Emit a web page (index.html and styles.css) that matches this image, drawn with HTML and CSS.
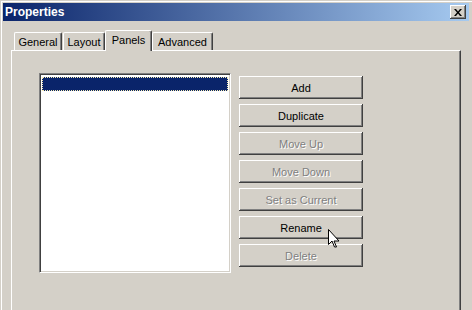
FILE: index.html
```html
<!DOCTYPE html>
<html lang="en">
<head>
  <meta charset="UTF-8">
  <title>Properties</title>
  <link rel="stylesheet" href="styles.css">
</head>
<body>
  <div class="window">
    <div class="titlebar">
      <span class="title">Properties</span>
      <button class="close" aria-label="Close">
        <svg width="8" height="7" viewBox="0 0 8 7"><path d="M0 0h2l2 2.5L6 0h2L5 3.5 8 7H6L4 4.5 2 7H0l3-3.5z" fill="#000"/></svg>
      </button>
    </div>

    <div class="content">
      <div class="tabs">
        <div class="tab tab-general">General</div>
        <div class="tab tab-layout">Layout</div>
        <div class="tab tab-panels active">Panels</div>
        <div class="tab tab-advanced">Advanced</div>
      </div>

      <div class="panel">
        <div class="listbox">
          <div class="item selected"></div>
        </div>
        <div class="buttons">
          <button class="btn">Add</button>
          <button class="btn">Duplicate</button>
          <button class="btn" disabled>Move Up</button>
          <button class="btn" disabled>Move Down</button>
          <button class="btn" disabled>Set as Current</button>
          <button class="btn">Rename</button>
          <button class="btn" disabled>Delete</button>
        </div>
      </div>
    </div>

    <svg class="pointer" width="12" height="20" viewBox="0 0 12 20">
      <path d="M0.5 0.5v15l3.5-3.5 2.5 6h2l-2.5-6h5z" fill="#fff" stroke="#000" stroke-width="1"/>
    </svg>
  </div>
</body>
</html>
```

FILE: styles.css
```css
body {
  margin: 0;
  font-family: "Liberation Sans", Arial, sans-serif;
  font-size: 11px;
  color: #000;
}
.window {
  position: relative;
  width: 472px;
  height: 310px;
  box-sizing: border-box;
  padding: 3px 3px 0 3px;
  background-color: #d4d0c8;
  box-shadow: inset 1px 1px 0 #d4d0c8, inset 2px 2px 0 #fff;
  overflow: hidden;
}
.titlebar {
  display: flex;
  align-items: center;
  justify-content: space-between;
  height: 18px;
  padding: 0 3px 0 2px;
  background: linear-gradient(to right, #0a246a, #a6caf0);
}
.title {
  color: #fff;
  font-weight: bold;
  font-size: 12px;
}
.close {
  display: flex;
  align-items: center;
  justify-content: center;
  width: 16px;
  height: 14px;
  padding: 0;
  border: none;
  background-color: #d4d0c8;
  box-shadow: inset -1px -1px 0 #404040, inset 1px 1px 0 #fff, inset -2px -2px 0 #808080;
}

.content {
  padding: 9px 8px 0 8px;
}
.tabs {
  display: flex;
  align-items: flex-end;
  height: 20px;
  padding-left: 3px;
  position: relative;
  z-index: 1;
}
.tab {
  box-sizing: border-box;
  height: 18px;
  padding-top: 3px;
  margin-right: 1px;
  text-align: center;
  border-top: 1px solid #fff;
  border-left: 1px solid #fff;
  border-right: 1px solid #404040;
  border-radius: 2px 2px 0 0;
  box-shadow: inset -1px 0 0 #808080;
  background-color: #d4d0c8;
}
.tab-general { width: 48px; }
.tab-layout { width: 42px; }
.tab-panels { width: 47px; }
.tab-advanced { width: 61px; }
.tab.active {
  height: 21px;
  margin-bottom: -1px;
  padding-top: 3px;
  margin-left: -1px;
  margin-right: 0;
}

.panel {
  display: flex;
  align-items: flex-start;
  height: 260px;
  padding: 22px 0 0 27px;
  border-top: 1px solid #fff;
  border-left: 1px solid #fff;
  border-right: 1px solid #404040;
  box-shadow: inset -1px 0 0 #808080;
}
.listbox {
  box-sizing: border-box;
  width: 192px;
  height: 200px;
  padding: 3px 2px;
  background: #fff;
  border-top: 1px solid #808080;
  border-left: 1px solid #808080;
  border-right: 1px solid #fff;
  border-bottom: 1px solid #fff;
  box-shadow: inset 1px 1px 0 #404040, inset -1px -1px 0 #d4d0c8;
}
.item {
  height: 14px;
}
.item.selected {
  box-sizing: border-box;
  background-color: #0a246a;
  border: 1px dotted #f5ecb4;
}

.buttons {
  display: flex;
  flex-direction: column;
  gap: 5px;
  margin: 3px 0 0 8px;
}
.btn {
  box-sizing: border-box;
  width: 124px;
  height: 23px;
  padding: 0;
  font-family: inherit;
  font-size: 11px;
  font-weight: normal;
  color: #000;
  border: none;
  background-color: #d4d0c8;
  box-shadow: inset -1px -1px 0 #404040, inset 1px 1px 0 #fff, inset -2px -2px 0 #808080;
}
.btn:disabled {
  color: #808080;
  text-shadow: 1px 1px 0 #fff;
}

.pointer {
  position: absolute;
  left: 328px;
  top: 229px;
}
```
